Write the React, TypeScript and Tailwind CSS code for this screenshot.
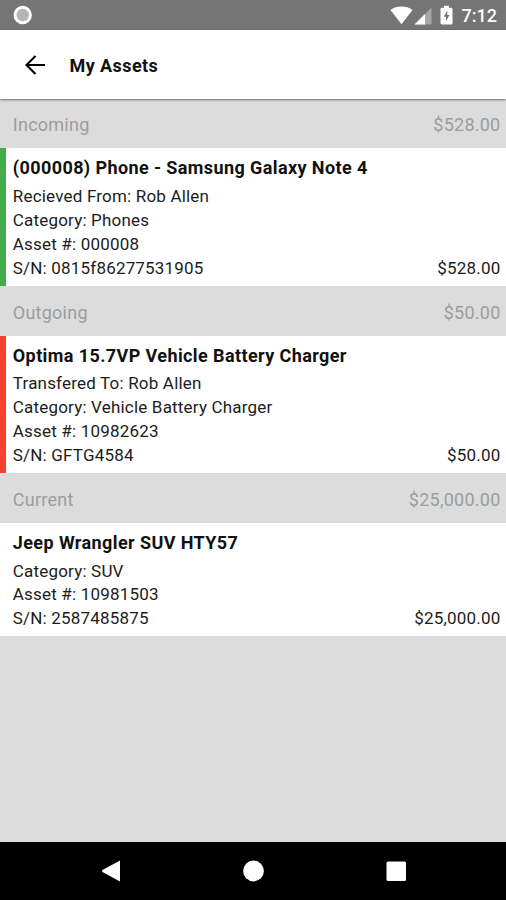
import clsx from "clsx";

interface Asset {
  title: string;
  details: string[];
  value: string;
}

interface Section {
  label: string;
  total: string;
  accent?: string;
  assets: Asset[];
}

const sections: Section[] = [
  {
    label: "Incoming",
    total: "$528.00",
    accent: "bg-[#43ac4b]",
    assets: [
      {
        title: "(000008) Phone - Samsung Galaxy Note 4",
        details: [
          "Recieved From: Rob Allen",
          "Category: Phones",
          "Asset #: 000008",
          "S/N: 0815f86277531905",
        ],
        value: "$528.00",
      },
    ],
  },
  {
    label: "Outgoing",
    total: "$50.00",
    accent: "bg-[#f8402f]",
    assets: [
      {
        title: "Optima 15.7VP Vehicle Battery Charger",
        details: [
          "Transfered To: Rob Allen",
          "Category: Vehicle Battery Charger",
          "Asset #: 10982623",
          "S/N: GFTG4584",
        ],
        value: "$50.00",
      },
    ],
  },
  {
    label: "Current",
    total: "$25,000.00",
    assets: [
      {
        title: "Jeep Wrangler SUV HTY57",
        details: ["Category: SUV", "Asset #: 10981503", "S/N: 2587485875"],
        value: "$25,000.00",
      },
    ],
  },
];

function StatusBar() {
  return (
    <div className="flex h-[30px] shrink-0 items-center justify-between bg-[#757575] pl-[13px] pr-[9px] text-white">
      <svg width="20" height="20" viewBox="0 0 20 20">
        <circle cx="9.7" cy="10" r="7.7" fill="#b4b4b4" stroke="#fff" strokeWidth="3" />
      </svg>
      <div className="flex items-center">
        {/* Wifi */}
        <svg width="24" height="20" viewBox="0 0 24 20" fill="#fff">
          <path d="M0.5 5C3.5 2.5 7.3 1.4 11.5 1.4s8 1.100 11 3.600L11.500 19.200z" />
        </svg>
        {/* Signal strength */}
        <svg className="mr-[8px]" width="18" height="20" viewBox="0 0 18 20">
          <path d="M17.500 2.500v17H0.500z" fill="#a6a6a6" />
          <path d="M11 9v10.500H0.500z" fill="#fff" />
        </svg>
        {/* Charging battery */}
        <svg className="mr-[9px]" width="13" height="20" viewBox="0 0 13 20">
          <path
            d="M4 0.8h5v2h2.200c.7 0 1.300.6 1.300 1.300v14c0 .7-.6 1.300-1.300 1.300H1.800C1.100 19.400 .5 18.800 .5 18.100v-14c0-.7.6-1.300 1.300-1.300H4z"
            fill="#fff"
          />
          <path d="M7.300 5.500L3.800 11.800h2.200v4.500L9.400 10H7.300z" fill="#757575" />
        </svg>
        <span className="pt-px text-[18px] leading-[29px] font-medium">7:12</span>
      </div>
    </div>
  );
}

function AppBar() {
  return (
    <header className="z-10 flex h-[69px] shrink-0 items-center bg-white pl-[25px] shadow-[0_1px_2px_rgba(0,0,0,0.5)]">
      <svg width="21" height="20" viewBox="0 0 21 20" fill="none" stroke="#000" strokeWidth="2.1">
        <path d="M20 10H2M10.5 1L1.5 10l9 9" />
      </svg>
      <h1 className="ml-[23.5px] pt-[2px] text-[18px] leading-6 font-bold tracking-[0.42px] text-[#111]">
        My Assets
      </h1>
    </header>
  );
}

function AssetCard({ asset, accent }: { asset: Asset; accent?: string }) {
  return (
    <div className="flex bg-white">
      <div className={clsx("w-[6px] shrink-0", accent)} />
      <div className="flex-1 pt-2 pr-[5.5px] pb-[5.2px] pl-[6.8px]">
        <h2 className="text-[18px] leading-6 font-bold tracking-[0.4px] text-[#111]">{asset.title}</h2>
        <div className="mt-[4.8px] flex items-end justify-between text-[17px] leading-[23.8px] tracking-[0.19px] text-[#1c1c1c]">
          <div>
            {asset.details.map((line) => (
              <p key={line}>{line}</p>
            ))}
          </div>
          <span>{asset.value}</span>
        </div>
      </div>
    </div>
  );
}

function NavBar() {
  return (
    <nav className="flex h-[58px] shrink-0 items-center justify-between bg-black pr-[99px] pl-[101px]">
      <svg width="20" height="22" viewBox="0 0 20 22" fill="#fff">
        <path d="M19 0.5v21L1.5 12q-1-1 0-2z" />
      </svg>
      <svg width="22" height="22" viewBox="0 0 22 22" fill="#fff">
        <circle cx="11.5" cy="11" r="10.4" />
      </svg>
      <svg width="22" height="22" viewBox="0 0 22 22" fill="#fff">
        <rect x="1.5" y="1.5" width="19.5" height="19.5" rx="1.5" />
      </svg>
    </nav>
  );
}

export default function App() {
  return (
    <div className="flex h-screen flex-col overflow-hidden bg-[#dcdcdc] font-[Roboto,sans-serif]">
      <StatusBar />
      <AppBar />
      <main className="-mt-[0.6px] flex-1">
        {sections.map((section) => (
          <section key={section.label}>
            <div className="flex h-[50px] items-center justify-between pt-[3px] pr-[5.5px] pl-[12.8px] text-[18px] tracking-[0.25px] text-[#9d9d9d]">
              <span>{section.label}</span>
              <span>{section.total}</span>
            </div>
            {section.assets.map((asset) => (
              <AssetCard key={asset.title} asset={asset} accent={section.accent} />
            ))}
          </section>
        ))}
      </main>
      <NavBar />
    </div>
  );
}
